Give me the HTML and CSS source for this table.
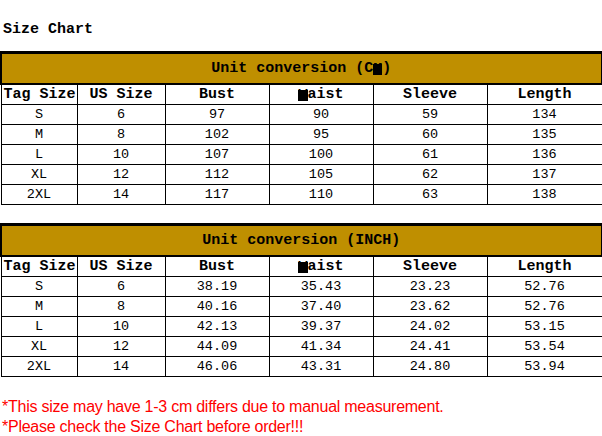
FILE: index.html
```html
<!DOCTYPE html>
<html>
<head>
<meta charset="utf-8">
<link rel="stylesheet" href="styles.css">
</head>
<body>
<div class="page">
  <h1 class="title">Size Chart</h1>

  <table class="chart">
    <colgroup>
      <col class="c1"><col class="c2"><col class="c3"><col class="c4"><col class="c5"><col class="c6">
    </colgroup>
    <tr class="cap"><td colspan="6">Unit conversion (C<span class="blk">M</span>)</td></tr>
    <tr class="head">
      <th class="left">Tag Size</th><th>US Size</th><th>Bust</th><th><span class="blk">W</span>aist</th><th>Sleeve</th><th>Length</th>
    </tr>
    <tr><td>S</td><td>6</td><td>97</td><td>90</td><td>59</td><td>134</td></tr>
    <tr><td>M</td><td>8</td><td>102</td><td>95</td><td>60</td><td>135</td></tr>
    <tr><td>L</td><td>10</td><td>107</td><td>100</td><td>61</td><td>136</td></tr>
    <tr><td>XL</td><td>12</td><td>112</td><td>105</td><td>62</td><td>137</td></tr>
    <tr><td>2XL</td><td>14</td><td>117</td><td>110</td><td>63</td><td>138</td></tr>
  </table>

  <table class="chart second">
    <colgroup>
      <col class="c1"><col class="c2"><col class="c3"><col class="c4"><col class="c5"><col class="c6">
    </colgroup>
    <tr class="cap"><td colspan="6">Unit conversion (INCH)</td></tr>
    <tr class="head">
      <th class="left">Tag Size</th><th>US Size</th><th>Bust</th><th><span class="blk">W</span>aist</th><th>Sleeve</th><th>Length</th>
    </tr>
    <tr><td>S</td><td>6</td><td>38.19</td><td>35.43</td><td>23.23</td><td>52.76</td></tr>
    <tr><td>M</td><td>8</td><td>40.16</td><td>37.40</td><td>23.62</td><td>52.76</td></tr>
    <tr><td>L</td><td>10</td><td>42.13</td><td>39.37</td><td>24.02</td><td>53.15</td></tr>
    <tr><td>XL</td><td>12</td><td>44.09</td><td>41.34</td><td>24.41</td><td>53.54</td></tr>
    <tr><td>2XL</td><td>14</td><td>46.06</td><td>43.31</td><td>24.80</td><td>53.94</td></tr>
  </table>

  <div class="notes">
    <p>*This size may have 1-3 cm differs due to manual measurement.</p>
    <p>*Please check the Size Chart before order!!!</p>
  </div>
</div>
</body>
</html>
```

FILE: styles.css
```css
html, body {
  margin: 0;
  padding: 0;
  background: #ffffff;
}

.page {
  padding-top: 20px;
}

.title {
  margin: 0 0 11px 3px;
  font-family: "Liberation Mono", monospace;
  font-weight: bold;
  font-size: 15px;
  line-height: 20px;
  color: #000;
}

.chart {
  border-collapse: collapse;
  table-layout: fixed;
  width: 601px;
  margin: 0;
  font-family: "Liberation Mono", monospace;
  color: #000;
}

.chart.second {
  margin-top: 18px;
}

.c1 { width: 76px; }
.c2 { width: 88px; }
.c3 { width: 104px; }
.c4 { width: 104px; }
.c5 { width: 114px; }
.c6 { width: 115px; }

.chart td,
.chart th {
  border: 1px solid #000;
  height: 19px;
  padding: 0;
  text-align: center;
  vertical-align: middle;
  font-size: 13.5px;
  font-weight: normal;
  line-height: 19px;
  white-space: nowrap;
}

.chart .cap td {
  background: #bf8f00;
  border-top: 3px solid #000;
  border-left: 2px solid #000;
  border-right: 3px solid #000;
  border-bottom: 2px solid #000;
  height: 29px;
  font-size: 15px;
  font-weight: bold;
  line-height: 29px;
}

.chart .head th {
  font-size: 15px;
  font-weight: bold;
}

.chart .head th.left {
  text-align: left;
  padding-left: 2px;
}

.blk {
  display: inline-block;
  height: 11px;
  line-height: 11px;
  background: #000;
  color: #000;
  vertical-align: -1px;
}

.notes {
  margin-top: 20px;
  font-family: "Liberation Sans", Arial, sans-serif;
  font-size: 16px;
  color: #ff0000;
}

.notes p {
  margin: 0 0 0 2px;
  line-height: 20px;
  letter-spacing: -0.25px;
}
```
